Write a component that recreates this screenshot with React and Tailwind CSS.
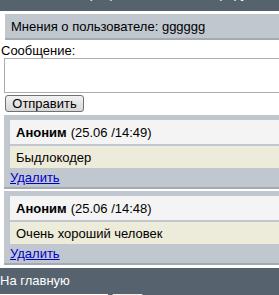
import React from "react";

const comments = [
  { id: 1, name: "Аноним", date: "(25.06 /14:49)", text: "Быдлокодер" },
  { id: 2, name: "Аноним", date: "(25.06 /14:48)", text: "Очень хороший человек" },
];

const Comment = ({ c }) => (
  <div className="ml-[4px] mb-[2px] bg-[#c1c7cf] border-b-2 border-[#a4aab2] pt-[5px] pl-[6px]">
    <div className="h-[24px] flex items-center px-[6px] bg-[#f4f4f4]">
      <span className="font-bold">{c.name}</span>
      <span className="ml-[4px]">{c.date}</span>
    </div>
    <div className="mt-[2px] h-[22px] flex items-center px-[6px] bg-[#edebd9]">
      {c.text}
    </div>
    <div className="h-[19px] leading-[19px]">
      <a href="#" className="text-[#0000cc] underline">
        Удалить
      </a>
    </div>
  </div>
);

export default function App() {
  return (
    <div className="w-[279px] h-[295px] overflow-hidden bg-white text-[13px] leading-[15px] text-black font-['Liberation_Sans',Arial,sans-serif]">
      <div className="h-[11px] bg-[#56636f] overflow-hidden">
        <div className="-mt-[14px] pl-[50px] text-white whitespace-nowrap">
          Регистрация пользователя форума
        </div>
      </div>

      <div className="mt-[3px] ml-[5px] h-[26px] bg-[#c1c7cf] border-b-2 border-[#a4aab2] flex items-center px-[6px]">
        Мнения о пользователе: gggggg
      </div>

      <div className="mt-[3px] pl-[1px]">Сообщение:</div>
      <textarea className="block ml-[4px] w-[290px] h-[35px] border border-[#a9adb3] bg-white resize-none" />

      <button className="block ml-[5px] mt-[2px] w-[79px] h-[17px] rounded-[3px] border border-[#707070] bg-gradient-to-b from-[#f2f2f2] to-[#d8d8d8] text-[13px] leading-[15px]">
        Отправить
      </button>

      <div className="mt-[3px]">
        {comments.map((c) => (
          <Comment key={c.id} c={c} />
        ))}
      </div>

      <div className="mt-[3px] bg-[#56636f] h-[40px] pt-[5px]">
        <div className="text-white">На главную</div>
        <div className="mt-[6px] flex">
          <div className="w-[108px] h-[20px] bg-white" />
          <div className="ml-[4px] w-[31px] h-[20px] bg-[#f0f0f0] rounded-[2px]" />
        </div>
      </div>
    </div>
  );
}
